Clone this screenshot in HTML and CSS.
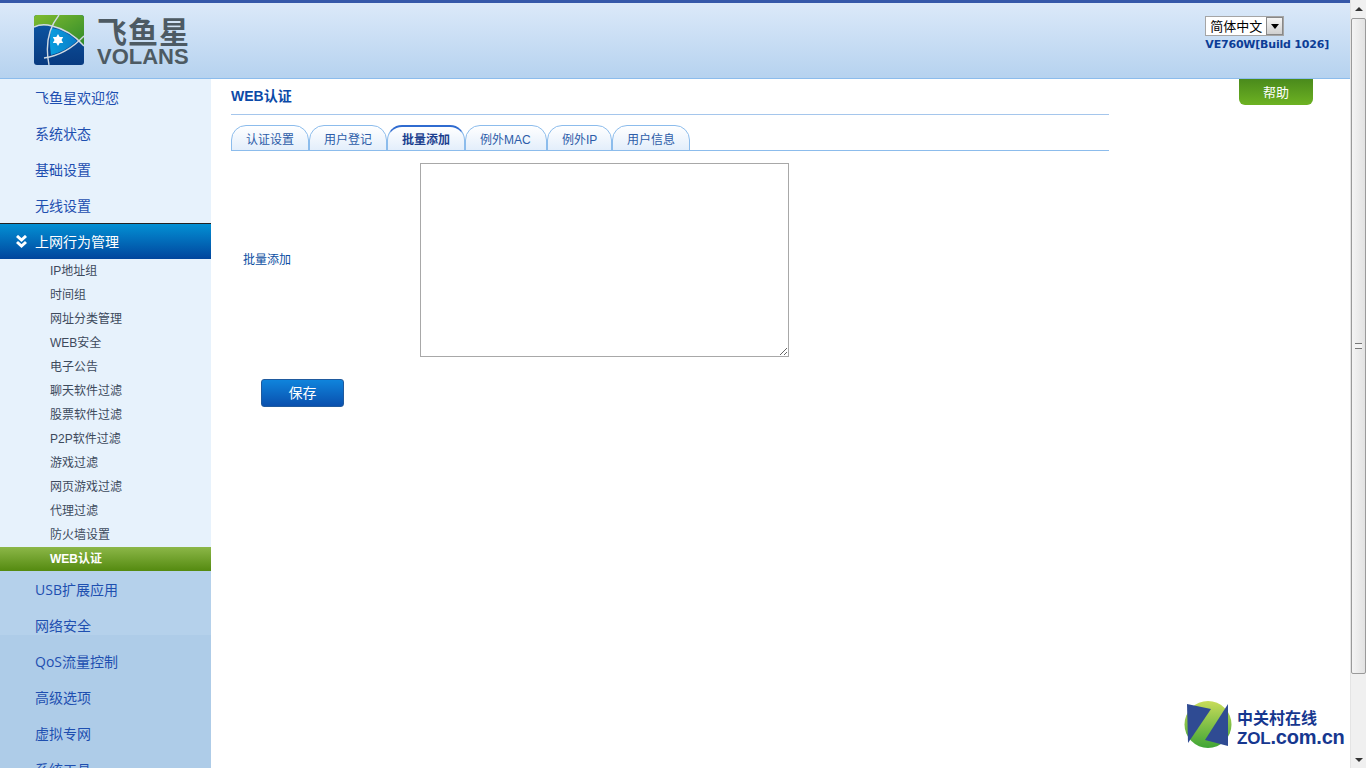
FILE: index.html
```html
<!DOCTYPE html>
<html lang="zh">
<head>
<meta charset="utf-8">
<title>VE760W</title>
<link rel="stylesheet" href="styles.css">
</head>
<body>
<div class="page">
  <div class="viewport">
    <header class="topbar">
      <div class="brand">
        <svg class="brand-mark" viewBox="0 0 50 50" width="50" height="50">
          <defs>
            <linearGradient id="lg-blue" x1="0" y1="0" x2="0" y2="1"><stop offset="0" stop-color="#0d5aa8"/><stop offset="1" stop-color="#083a80"/></linearGradient>
            <linearGradient id="lg-green" x1="0" y1="0" x2="1" y2="1"><stop offset="0" stop-color="#7fbb2e"/><stop offset="1" stop-color="#2f8a2c"/></linearGradient>
            <linearGradient id="lg-cyan" x1="0" y1="0" x2="1" y2="0"><stop offset="0" stop-color="#0a9ede"/><stop offset="1" stop-color="#0a7cc8"/></linearGradient>
            <clipPath id="clip-mark"><rect width="50" height="50" rx="3"/></clipPath>
          </defs>
          <g clip-path="url(#clip-mark)">
            <rect width="50" height="50" fill="url(#lg-blue)"/>
            <path d="M0 0H50V31Q34 14 18 11Q7 9 0 12Z" fill="url(#lg-green)"/>
            <path d="M17 13Q32 15 43 26Q32 36 17 40Q15 27 17 13Z" fill="url(#lg-cyan)"/>
            <path d="M0 12Q8 8 18 11Q36 15 50 31" fill="none" stroke="#cfd9e2" stroke-width="1.4"/>
            <path d="M25 0Q9 20 15 50" fill="none" stroke="#cfd9e2" stroke-width="1.4"/>
            <path d="M10 43Q32 40 50 21" fill="none" stroke="#cfd9e2" stroke-width="1.4"/>
            <path d="M24 19l1.7 3 3.5 0-1.7 3 1.7 3-3.5 0-1.7 3-1.7-3-3.5 0 1.7-3-1.7-3 3.5 0Z" fill="#fff"/>
          </g>
        </svg>
        <div class="brand-text">
          <span class="brand-cn">飞鱼星</span>
          <span class="brand-en">VOLANS</span>
        </div>
      </div>
      <div class="top-right">
        <div class="lang-select">
          <span class="lang-value">简体中文</span>
          <span class="lang-btn"><svg viewBox="0 0 8 5" width="8" height="5"><path d="M0 0H8L4 5Z" fill="#000"/></svg></span>
        </div>
        <div class="version">VE760W[Build 1026]</div>
      </div>
    </header>
    <div class="body-row">
      <nav class="sidebar">
        <a class="nav-item">飞鱼星欢迎您</a>
        <a class="nav-item">系统状态</a>
        <a class="nav-item">基础设置</a>
        <a class="nav-item">无线设置</a>
        <a class="nav-item nav-open">
          <svg class="nav-chevron" viewBox="0 0 11 13" width="11" height="13"><path d="M1 1L5.5 5L10 1M1 7L5.5 11L10 7" fill="none" stroke="#fff" stroke-width="3"/></svg>
          上网行为管理
        </a>
        <a class="sub-item">IP地址组</a>
        <a class="sub-item">时间组</a>
        <a class="sub-item">网址分类管理</a>
        <a class="sub-item">WEB安全</a>
        <a class="sub-item">电子公告</a>
        <a class="sub-item">聊天软件过滤</a>
        <a class="sub-item">股票软件过滤</a>
        <a class="sub-item">P2P软件过滤</a>
        <a class="sub-item">游戏过滤</a>
        <a class="sub-item">网页游戏过滤</a>
        <a class="sub-item">代理过滤</a>
        <a class="sub-item">防火墙设置</a>
        <a class="sub-item sub-active">WEB认证</a>
        <div class="nav-lower">
          <a class="nav-item">USB扩展应用</a>
          <a class="nav-item">网络安全</a>
          <a class="nav-item">QoS流量控制</a>
          <a class="nav-item">高级选项</a>
          <a class="nav-item">虚拟专网</a>
          <a class="nav-item">系统工具</a>
        </div>
      </nav>
      <main class="main">
        <section class="content">
          <h1 class="title">WEB认证</h1>
          <div class="tabs">
            <a class="tab">认证设置</a>
            <a class="tab">用户登记</a>
            <a class="tab tab-active">批量添加</a>
            <a class="tab">例外MAC</a>
            <a class="tab">例外IP</a>
            <a class="tab">用户信息</a>
          </div>
          <div class="form-row">
            <label class="form-label" for="batch">批量添加</label>
            <textarea class="form-area" id="batch"></textarea>
          </div>
          <button class="save-btn" type="button">保存</button>
        </section>
        <a class="help-btn">帮助</a>
      </main>
    </div>
    <div class="watermark">
      <svg class="wm-mark" viewBox="0 0 50 48" width="50" height="48">
        <defs>
          <linearGradient id="wm-z" x1="0" y1="0" x2="0" y2="1"><stop offset="0" stop-color="#c8dc5a"/><stop offset="1" stop-color="#3fa535"/></linearGradient>
        </defs>
        <circle cx="25" cy="24.5" r="23.5" fill="url(#wm-z)"/>
        <path d="M4 4L28 9L5 43Z" fill="#2f4b93"/>
        <path d="M45 4V46L22 40Z" fill="#2f4b93"/>
      </svg>
      <div class="wm-text">
        <span class="wm-cn">中关村在线</span>
        <span class="wm-en"><span class="wm-caps">ZOL</span>.com.cn</span>
      </div>
    </div>
  </div>
  <div class="scrollbar">
    <div class="sb-arrow"><svg viewBox="0 0 8 4" width="8" height="4"><path d="M0 4H8L4 0Z" fill="#333"/></svg></div>
    <div class="sb-thumb"><span class="sb-grip"></span></div>
    <div class="sb-track"></div>
    <div class="sb-arrow"><svg viewBox="0 0 8 4" width="8" height="4"><path d="M0 0H8L4 4Z" fill="#333"/></svg></div>
  </div>
</div>
</body>
</html>
```
FILE: styles.css
```css
* { box-sizing: border-box; }
html, body { margin: 0; height: 100%; overflow: hidden; background: #fff; }
body { font-family: "Noto Sans CJK SC", "Liberation Sans", sans-serif; font-size: 12px; color: #0b4ea2; }
a { display: block; }

.page { display: flex; width: 1366px; height: 768px; overflow: hidden; }
.viewport { position: relative; width: 1350px; height: 768px; overflow: hidden; display: flex; flex-direction: column; }

.topbar {
  flex: none; height: 79px;
  border-top: 3px solid #3558a9; border-bottom: 1px solid #8cbcec;
  background: linear-gradient(#dbe9f9, #b6d2ef);
  display: flex; justify-content: space-between;
  padding: 12px 21px 0 34px;
}
.brand { display: flex; gap: 13px; align-items: flex-start; }
.brand-mark { display: block; }
.brand-text { display: flex; flex-direction: column; color: #4d5a63; font-weight: 700; }
.brand-cn { font-size: 30px; line-height: 30px; letter-spacing: 1px; white-space: nowrap; }
.brand-en { font-family: "Liberation Sans", sans-serif; font-size: 22px; line-height: 22px; margin-top: 1px; letter-spacing: 0; }

.top-right { display: flex; flex-direction: column; align-items: flex-start; padding-top: 1px; }
.lang-select { width: 79px; height: 20px; display: flex; justify-content: space-between; background: #fff; border: 1px solid #a5a5a5; }
.lang-value { font-size: 13px; line-height: 18px; color: #000; padding-left: 4px; white-space: nowrap; }
.lang-btn { width: 17px; height: 18px; display: flex; align-items: center; justify-content: center; background: linear-gradient(#f5f5f5, #d0d0d0); border: 1px solid #888; }
.version { font-family: "DejaVu Sans", sans-serif; font-size: 11px; font-weight: 700; line-height: 15px; color: #0d3d96; margin-top: 1px; white-space: nowrap; letter-spacing: -.2px; }

.body-row { flex: 1; min-height: 0; display: flex; }

.sidebar { flex: none; width: 211px; background: #e7f2fc; overflow: hidden; }
.nav-item { height: 36px; padding: 1px 0 0 35px; font-size: 14px; line-height: 36px; color: #1e4fb0; white-space: nowrap; font-family: "Open Sans", "Noto Sans CJK SC", sans-serif; }
.nav-open { position: relative; height: 36px; color: #fff; background: linear-gradient(#0390d4, #01459d); border-top: 1px solid #222; line-height: 36px; padding-top: 0; }
.nav-chevron { position: absolute; left: 16px; top: 11px; }
.sub-item { height: 24px; padding-left: 50px; line-height: 24px; color: #3d4a5c; white-space: nowrap; font-family: "Liberation Sans", "Noto Sans CJK SC", sans-serif; }
.sub-active { color: #fff; font-weight: 700; background: linear-gradient(#8cb748, #548a10); }
.nav-lower { background: linear-gradient(#b5d1eb 0, #b5d1eb 64px, #aecce8 64px); }

.main { flex: 1; min-width: 0; display: flex; align-items: flex-start; padding-left: 20px; }
.content { width: 878px; flex: none; }
.title { margin: 0; height: 36px; border-bottom: 1px solid #a5c6ec; font-size: 14px; font-weight: 700; line-height: 35px; color: #0b4aa8; font-family: "Liberation Sans", "Noto Sans CJK SC", sans-serif; }
.tabs { display: flex; height: 26px; margin-top: 10px; border-bottom: 1px solid #8cbcec; }
.tab {
  flex: none; height: 26px; padding: 0 14px;
  border: 1px solid #8cbcec; border-bottom: 1px solid #8cbcec; border-radius: 15px 15px 0 0;
  background: linear-gradient(#fff, #e3eefb);
  font-size: 12px; line-height: 28px; color: #2c5ca8; white-space: nowrap;
  font-family: "Liberation Sans", "Noto Sans CJK SC", sans-serif;
}
.tab:nth-child(1), .tab:nth-child(2), .tab:nth-child(3), .tab:nth-child(6) { width: 78px; }
.tab:nth-child(4) { width: 82px; }
.tab:nth-child(5) { width: 65px; }
.tab-active { font-weight: 700; color: #1b3f8f; border-top: 2px solid #2f6bd0; line-height: 27px; }

.form-row { display: flex; align-items: center; margin-top: 12px; padding-left: 12px; }
.form-label { width: 177px; flex: none; font-size: 12px; color: #0b4ea2; padding-bottom: 4px; }
.form-area { width: 369px; height: 194px; border: 1px solid #a8a8a8; background: #fff; margin: 0; display: block; outline: none; }
.save-btn {
  display: block; width: 83px; height: 28px; margin: 22px 0 0 30px;
  border: 1px solid #1f5a9e; border-radius: 3px;
  background: linear-gradient(#0f84dc, #0a50ae);
  color: #fff; font: 14px/24px "Noto Sans CJK SC", sans-serif; padding: 0 0 2px;
}
.help-btn {
  flex: none; width: 74px; height: 26px; margin-left: 130px;
  border-radius: 0 0 6px 6px;
  background: linear-gradient(#4a8a1c, #6db222);
  color: #fff; font-size: 13px; line-height: 26px; text-align: center;
}

.watermark { position: absolute; left: 1183px; top: 700px; display: flex; gap: 4px; }
.wm-mark { display: block; }
.wm-text { display: flex; flex-direction: column; color: #16378f; font-weight: 700; padding-top: 7px; }
.wm-cn { font-size: 16px; line-height: 20px; white-space: nowrap; }
.wm-en { font-family: "Liberation Sans", sans-serif; font-size: 20px; line-height: 20px; white-space: nowrap; letter-spacing: -.2px; }
.wm-caps { font-size: 17px; }

.scrollbar { flex: none; width: 16px; height: 768px; background: #f0f0f0; display: flex; flex-direction: column; border-left: 1px solid #e4e4e4; }
.sb-arrow { flex: none; height: 17px; display: flex; align-items: center; justify-content: center; }
.sb-thumb { flex: none; height: 656px; margin-top: 1px; border: 1px solid #9a9a9a; border-radius: 2px; background: linear-gradient(90deg, #f4f4f4, #e2e2e2); display: flex; align-items: center; justify-content: center; }
.sb-grip { width: 7px; height: 6px; border-top: 1px solid #777; border-bottom: 1px solid #777; background: linear-gradient(#f4f4f4 40%, #777 40%, #777 60%, #f4f4f4 60%); }
.sb-track { flex: 1; }
```
